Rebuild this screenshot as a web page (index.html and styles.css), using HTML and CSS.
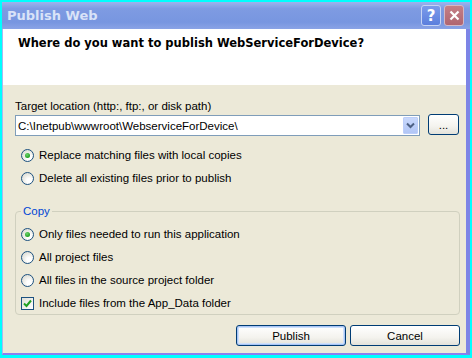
FILE: index.html
```html
<!DOCTYPE html>
<html lang="en">
<head>
    <meta charset="UTF-8">
    <title>Publish Web</title>
    <link rel="stylesheet" href="styles.css">
</head>
<body>
    <div class="window">
        <!-- Title bar -->
        <div class="titlebar">
            <span class="title">Publish Web</span>
            <div class="title-buttons">
                <button class="tbtn help">?</button>
                <button class="tbtn close">
                    <svg width="11" height="11" viewBox="0 0 11 11"><path d="M1.5 1.5 L9.5 9.5 M9.5 1.5 L1.5 9.5" stroke="#fff" stroke-width="2.2" fill="none"/></svg>
                </button>
            </div>
        </div>

        <!-- White header -->
        <div class="header">Where do you want to publish WebServiceForDevice?</div>

        <!-- Dialog body -->
        <div class="content">
            <div class="label">Target location (http:, ftp:, or disk path)</div>
            <div class="location-row">
                <div class="combo">
                    <span class="combo-text">C:\Inetpub\wwwroot\WebserviceForDevice\</span>
                    <span class="combo-drop">
                        <svg width="9" height="7" viewBox="0 0 9 7"><path d="M1 1.5 L4.5 5 L8 1.5" stroke="#4d6185" stroke-width="2" fill="none"/></svg>
                    </span>
                </div>
                <button class="btn browse">...</button>
            </div>

            <div class="options">
                <div class="option"><span class="radio checked"></span>Replace matching files with local copies</div>
                <div class="option"><span class="radio"></span>Delete all existing files prior to publish</div>
            </div>

            <fieldset class="group">
                <legend>Copy</legend>
                <div class="option"><span class="radio checked"></span>Only files needed to run this application</div>
                <div class="option"><span class="radio"></span>All project files</div>
                <div class="option"><span class="radio"></span>All files in the source project folder</div>
                <div class="option">
                    <span class="check">
                        <svg width="9" height="9" viewBox="0 0 9 9"><path d="M1 4.5 L3.5 7 L8 1.5" stroke="#21a121" stroke-width="2" fill="none"/></svg>
                    </span>Include files from the App_Data folder
                </div>
            </fieldset>

            <div class="actions">
                <button class="btn default">Publish</button>
                <button class="btn">Cancel</button>
            </div>
        </div>
    </div>
</body>
</html>
```

FILE: styles.css
```css
/* Windows XP style dialog */
html, body {
    margin: 0;
    padding: 0;
}
body {
    width: 472px;
    height: 358px;
    box-sizing: border-box;
    padding: 2px 2px 3px 2px;
    background-color: #00ffff;
    font-family: "Liberation Sans", Arial, sans-serif;
    font-size: 11.5px;
    color: #000;
}
.window {
    height: 100%;
    box-sizing: border-box;
    display: flex;
    flex-direction: column;
    border-left: 1px solid #a8b8f0;
    border-right: 4px solid #7d84e6;
    border-bottom: 2px solid #8c7ff0;
    background-color: #ece9d8;
}
.titlebar {
    height: 27px;
    display: flex;
    align-items: center;
    justify-content: space-between;
    padding: 0 2px 0 4px;
    margin-left: -1px;
    margin-right: -4px;
    background: linear-gradient(to bottom, #9db3ec 0%, #7e9be2 25%, #7896e0 75%, #8aa3e6 100%);
}
.title {
    font-family: "DejaVu Sans", Verdana, sans-serif;
    font-weight: bold;
    font-size: 13px;
    color: #d9e3f8;
    padding-left: 1px;
}
.title-buttons {
    display: flex;
    gap: 3px;
    padding-right: 4px;
}
.tbtn {
    width: 20px;
    height: 21px;
    padding: 0;
    border: 1px solid #c7d4f4;
    border-radius: 3px;
    display: flex;
    align-items: center;
    justify-content: center;
    color: #fff;
    font-family: "DejaVu Sans", Verdana, sans-serif;
    font-weight: bold;
    font-size: 15px;
}
.help {
    background: linear-gradient(to bottom, #7c9bea, #5b7fdd);
}
.close {
    background: linear-gradient(to bottom, #c47f87, #b06570);
    border-color: #d4b8c4;
}
.header {
    height: 56px;
    box-sizing: border-box;
    background-color: #fff;
    padding: 7px 0 0 15px;
    font-family: "DejaVu Sans", Verdana, sans-serif;
    font-weight: bold;
    font-size: 11.5px;
    line-height: 14px;
}
.content {
    flex: 1;
    display: flex;
    flex-direction: column;
    padding: 14px 6px 0 12px;
}
.label {
    line-height: 14px;
}
.location-row {
    display: flex;
    gap: 8px;
    margin-top: 2px;
}
.combo {
    flex: 1;
    height: 21px;
    box-sizing: border-box;
    border: 1px solid #7f9db9;
    background-color: #fff;
    display: flex;
    align-items: center;
    justify-content: space-between;
    padding: 0 1px 0 2px;
}
.combo-drop {
    width: 15px;
    height: 17px;
    box-sizing: border-box;
    border: 1px solid #bccefa;
    border-radius: 1px;
    background: linear-gradient(to bottom, #c8d8fc, #b2c6f6);
    display: flex;
    align-items: center;
    justify-content: center;
}
.btn {
    height: 21px;
    box-sizing: border-box;
    border: 1px solid #003c74;
    border-radius: 3px;
    background: linear-gradient(to bottom, #ffffff 0%, #f4f3ee 60%, #e3e2da 100%);
    font-family: "Liberation Sans", Arial, sans-serif;
    font-size: 11.5px;
    color: #000;
    padding: 0;
}
.browse {
    width: 31px;
    margin-top: -1px;
    margin-right: 1px;
}
.default {
    box-shadow: inset 0 0 0 1px #a9c5f5, inset 0 0 0 2px #cde0fb;
}
.options {
    margin: 10px 0 0 6px;
}
.option {
    display: flex;
    align-items: center;
    height: 18px;
    margin-bottom: 5px;
}
.group .option:last-child {
    margin-bottom: 0;
}
.radio {
    width: 13px;
    height: 13px;
    box-sizing: border-box;
    border: 1px solid #1c5180;
    border-radius: 50%;
    background: radial-gradient(circle at 65% 70%, #ffffff 20%, #e8e8e2 60%, #d4d4cc 100%);
    margin-right: 5px;
    display: flex;
    align-items: center;
    justify-content: center;
}
.radio.checked::after {
    content: "";
    width: 5px;
    height: 5px;
    border-radius: 50%;
    background: radial-gradient(circle at 40% 35%, #6fd26f, #21a121 70%);
}
.check {
    width: 13px;
    height: 13px;
    box-sizing: border-box;
    border: 1px solid #1c5180;
    background: linear-gradient(to bottom right, #e0e0d8, #ffffff);
    margin-right: 5px;
    display: flex;
    align-items: center;
    justify-content: center;
}
.group {
    margin: 12px 0 0 0;
    padding: 7px 5px 2px 5px;
    border: 1px solid #d0d0bf;
    border-radius: 4px;
}
.group legend {
    padding: 0 2px;
    color: #0046d5;
    line-height: 14px;
}
.actions {
    display: flex;
    justify-content: flex-end;
    gap: 4px;
    margin-top: 10px;
}
.actions .btn {
    width: 110px;
}
```
